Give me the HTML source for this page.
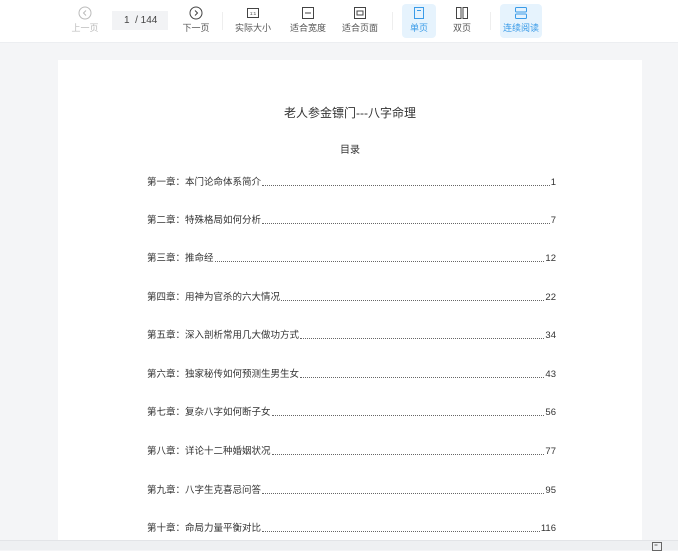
<!DOCTYPE html>
<html><head><meta charset="utf-8"><style>
*{margin:0;padding:0;box-sizing:border-box}
body{width:678px;height:550px;overflow:hidden;background:#f4f5f7;font-family:"Liberation Sans","Noto Sans CJK SC",sans-serif;position:relative}
.tb{position:absolute;left:0;top:0;width:678px;height:43px;background:#fff;border-bottom:1px solid #eceef1}
.it{position:absolute;top:4px;height:34px;text-align:center;font-size:9px;color:#555}
.it svg{display:block;margin:2px auto 1px}
.hl{background:#e6f3fd;border-radius:4px;color:#3a9be8}
.sep{position:absolute;top:12px;width:1px;height:18px;background:#eee}
.pg{position:absolute;left:112px;top:11px;width:56px;height:19px;background:#f2f3f5;font-size:10px;color:#444;line-height:19px;padding-left:12px}
.page{position:absolute;left:58px;top:60px;width:584px;height:490px;background:#fff}
.t{position:absolute;left:0;width:584px;text-align:center;color:#333}
.row{position:absolute;left:89px;width:409px;font-size:9.5px;color:#333;display:flex;align-items:flex-end;height:12px}
.row .d{flex:1;border-bottom:1px dotted #666;margin:0 1px 2px}
.bot{position:absolute;left:0;top:540px;width:678px;height:10px;background:#eef0f2;border-top:1px solid #e2e4e7}
</style></head><body>
<div class="tb">
<div class="it" style="left:68px;width:34px;color:#bbb"><svg width="14" height="14" viewBox="0 0 14 14"><circle cx="7" cy="7" r="6" fill="none" stroke="#bbb"/><path d="M8 4.5L5.5 7 8 9.5" fill="none" stroke="#bbb"/></svg>上一页</div>
<div class="pg">1 &nbsp;/ 144</div>
<div class="it" style="left:179px;width:34px"><svg width="14" height="14" viewBox="0 0 14 14"><circle cx="7" cy="7" r="6" fill="none" stroke="#444"/><path d="M6 4.5L8.5 7 6 9.5" fill="none" stroke="#444"/></svg>下一页</div>
<div class="sep" style="left:222px"></div>
<div class="it" style="left:233px;width:40px"><svg width="14" height="14" viewBox="0 0 14 14"><rect x="1.5" y="2.5" width="11" height="9" fill="none" stroke="#444"/><text x="7" y="9" font-size="4.5" text-anchor="middle" fill="#444">1:1</text></svg>实际大小</div>
<div class="it" style="left:288px;width:40px"><svg width="14" height="14" viewBox="0 0 14 14"><rect x="1.5" y="1.5" width="11" height="11" fill="none" stroke="#444"/><path d="M4 7h6" stroke="#444"/></svg>适合宽度</div>
<div class="it" style="left:340px;width:40px"><svg width="14" height="14" viewBox="0 0 14 14"><rect x="1.5" y="1.5" width="11" height="11" fill="none" stroke="#444"/><rect x="4" y="5" width="6" height="4" fill="none" stroke="#444"/></svg>适合页面</div>
<div class="sep" style="left:392px"></div>
<div class="it hl" style="left:402px;width:34px"><svg width="14" height="14" viewBox="0 0 14 14"><rect x="2.5" y="1.5" width="9" height="11" fill="none" stroke="#3a9be8"/><path d="M5 4.5h4" stroke="#3a9be8"/></svg>单页</div>
<div class="it" style="left:445px;width:34px"><svg width="14" height="14" viewBox="0 0 14 14"><rect x="1.5" y="1.5" width="4.5" height="11" fill="none" stroke="#444"/><rect x="8" y="1.5" width="4.5" height="11" fill="none" stroke="#444"/></svg>双页</div>
<div class="sep" style="left:490px"></div>
<div class="it hl" style="left:500px;width:42px"><svg width="14" height="14" viewBox="0 0 14 14"><rect x="1.5" y="1.5" width="11" height="4.5" rx="1" fill="none" stroke="#3a9be8"/><rect x="1.5" y="8" width="11" height="4.5" rx="1" fill="none" stroke="#3a9be8"/></svg>连续阅读</div>
</div>
<div class="page">
<div class="t" style="top:44px;font-size:12px">老人参金镖门---八字命理</div>
<div class="t" style="top:81px;font-size:10px">目录</div>
<div class="row" style="top:116px">第一章：本门论命体系简介<span class="d"></span>1</div>
<div class="row" style="top:154px">第二章：特殊格局如何分析<span class="d"></span>7</div>
<div class="row" style="top:192px">第三章：推命经 <span class="d"></span>12</div>
<div class="row" style="top:231px">第四章：用神为官杀的六大情况<span class="d"></span>22</div>
<div class="row" style="top:269px">第五章：深入剖析常用几大做功方式<span class="d"></span>34</div>
<div class="row" style="top:308px">第六章：独家秘传如何预测生男生女 <span class="d"></span>43</div>
<div class="row" style="top:346px">第七章：复杂八字如何断子女<span class="d"></span>56</div>
<div class="row" style="top:385px">第八章：详论十二种婚姻状况<span class="d"></span>77</div>
<div class="row" style="top:424px">第九章：八字生克喜忌问答<span class="d"></span>95</div>
<div class="row" style="top:462px">第十章：命局力量平衡对比<span class="d"></span>116</div>
</div>
<div class="bot"><svg style="position:absolute;left:652px;top:1px" width="10" height="9" viewBox="0 0 10 9"><rect x="0.5" y="0.5" width="9" height="8" fill="none" stroke="#666"/><path d="M2.5 3h3" stroke="#666"/></svg></div>
</body></html>
